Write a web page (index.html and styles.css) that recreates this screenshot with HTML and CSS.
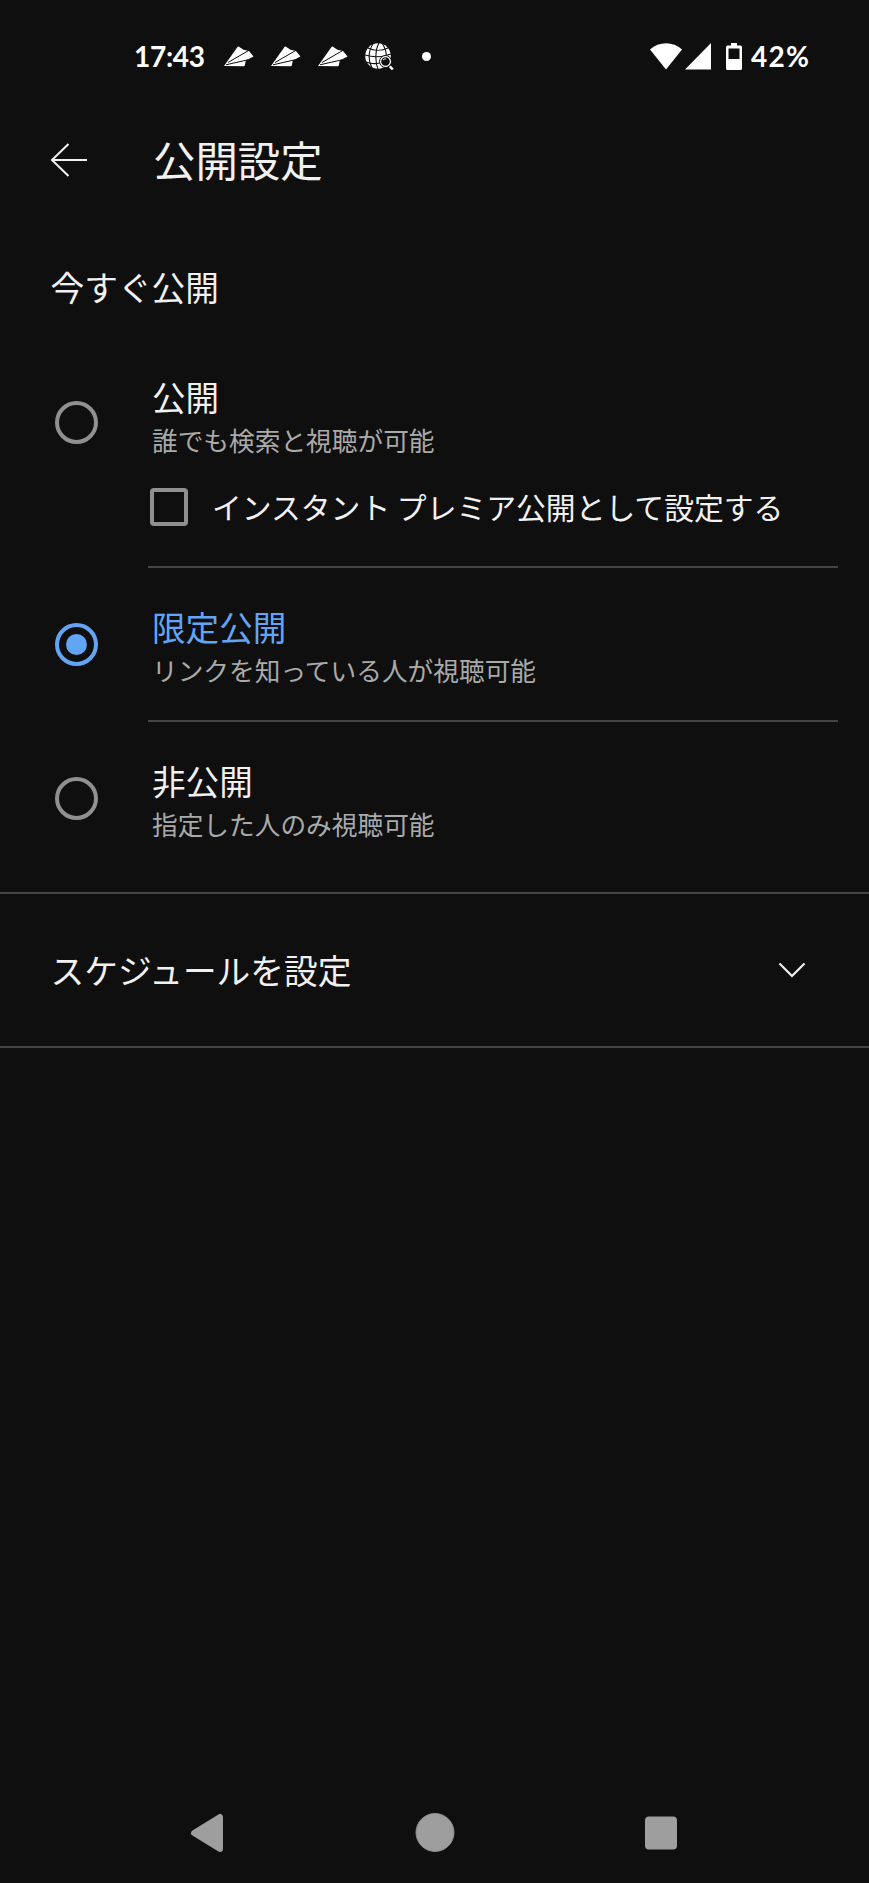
FILE: index.html
```html
<!DOCTYPE html>
<html lang="ja">
<head>
    <meta charset="UTF-8">
    <meta name="viewport" content="width=device-width, initial-scale=1.0">
    <title>公開設定</title>
    <link rel="stylesheet" href="styles.css">
</head>
<body>
    <svg class="symbols" width="0" height="0">
        <symbol id="plane" viewBox="0 0 30 21">
            <path fill="#fff" d="M0 20 L13.500 1 Q14 .2 15 .8 L19.500 3.800 L25 5 L29.500 10.500 L21.800 14.500 L20.800 19.500 Q20.600 20.300 19.500 20.300 Z"/>
            <path fill="none" stroke="#0f0f0f" stroke-width="1" d="M4 16.500 L25 4.300 M2 18.800 L24 13.800"/>
        </symbol>
    </svg>

    <div class="screen">
        <div class="status-bar">
            <span class="clock">17:43</span>
            <div class="notifications">
                <svg class="plane" width="30" height="21"><use href="#plane"/></svg>
                <svg class="plane" width="30" height="21"><use href="#plane"/></svg>
                <svg class="plane" width="30" height="21"><use href="#plane"/></svg>
                <svg class="globe" width="29" height="28" viewBox="0 0 29 28">
                    <circle cx="13" cy="13" r="12.8" fill="#fff"/>
                    <g fill="none" stroke="#0f0f0f" stroke-width="1.1">
                        <path d="M14 0 C10 7 10 19 13 26 M8 1 C3 8 3 18 7 25 M17 0 C21 6 22 11 21 17"/>
                        <path d="M3 5 C9 8 17 8 23 5 M0 12 C8 14.500 18 14 26 11 M1 19 C6 21 10 21 15 20"/>
                    </g>
                    <circle cx="20.500" cy="18.500" r="6" fill="#fff" stroke="#0f0f0f" stroke-width="1"/>
                    <circle cx="20.500" cy="18.500" r="4.300" fill="#0f0f0f"/>
                    <path d="M18 17 A3 3 0 0 1 21 16" fill="none" stroke="#fff"/>
                    <path d="M24.800 23.300 L27.800 26.500" stroke="#fff" stroke-width="2.500"/>
                </svg>
                <span class="dot"></span>
            </div>
            <div class="system">
                <svg width="32" height="27" viewBox="0 0 32 27">
                    <path fill="#fff" d="M0 6.500 C9 -2 23 -2 32 6.500 L16 26.500 Z"/>
                </svg>
                <svg class="signal" width="26" height="27" viewBox="0 0 26 27">
                    <path fill="#fff" d="M26 0 V26.500 H0 Z"/>
                </svg>
                <svg class="battery" width="16" height="28" viewBox="0 0 16 28">
                    <path fill="#fff" fill-rule="evenodd" d="M5 0 H11 V2.500 H14.500 Q16 2.500 16 4 V25.500 Q16 27 14.500 27 H1.500 Q0 27 0 25.500 V4 Q0 2.500 1.500 2.500 H5 Z M2.500 5.500 V16 H13.500 V5.500 Z"/>
                </svg>
                <span class="percent">42%</span>
            </div>
        </div>

        <div class="app-bar">
            <svg class="back" width="38" height="36" viewBox="0 0 38 36">
                <path d="M18.500 2 L2 18 L18.500 34 M2 18 H37"/>
            </svg>
            <h1>公開設定</h1>
        </div>

        <h2 class="section-title">今すぐ公開</h2>

        <div class="options">
            <div class="option option-public">
                <span class="radio"></span>
                <div class="option-body">
                    <div class="option-name">公開</div>
                    <div class="option-desc">誰でも検索と視聴が可能</div>
                    <div class="premiere">
                        <span class="checkbox"></span>
                        <span class="premiere-label">インスタント プレミア公開として設定する</span>
                    </div>
                </div>
            </div>
            <div class="option option-unlisted selected">
                <span class="radio"></span>
                <div class="option-body">
                    <div class="option-name">限定公開</div>
                    <div class="option-desc">リンクを知っている人が視聴可能</div>
                </div>
            </div>
            <div class="option option-private">
                <span class="radio"></span>
                <div class="option-body">
                    <div class="option-name">非公開</div>
                    <div class="option-desc">指定した人のみ視聴可能</div>
                </div>
            </div>
        </div>

        <div class="schedule">
            <span>スケジュールを設定</span>
            <svg width="28" height="16" viewBox="0 0 28 16">
                <path d="M1.500 1.500 L14 14 L26.500 1.500"/>
            </svg>
        </div>

        <div class="nav-bar">
            <svg width="40" height="42" viewBox="0 0 40 42">
                <path d="M6 21 L32 5 V37 Z" fill="#9e9e9e" stroke="#9e9e9e" stroke-width="6" stroke-linejoin="round"/>
            </svg>
            <svg width="40" height="42" viewBox="0 0 40 42">
                <circle cx="20" cy="20.500" r="19" fill="#9e9e9e" stroke="#8c8c8c"/>
            </svg>
            <svg width="40" height="42" viewBox="0 0 40 42">
                <rect x="4" y="4.500" width="32" height="33" rx="4" fill="#9e9e9e"/>
            </svg>
        </div>
    </div>
</body>
</html>
```

FILE: styles.css
```css
* {
    margin: 0;
    padding: 0;
    box-sizing: border-box;
}

body {
    font-family: "Noto Sans CJK JP", sans-serif;
    background: #0f0f0f;
    color: #f1f1f1;
}

svg {
    display: block;
    flex: none;
}

.symbols {
    display: none;
}

.screen {
    display: flex;
    flex-direction: column;
    height: 1883px;
}

/* status bar */
.status-bar {
    display: flex;
    align-items: center;
    height: 114px;
    padding: 0 57px 1px 134px;
    font-family: Lato, sans-serif;
    font-size: 28px;
    font-weight: 700;
    color: #fff;
}

.clock {
    width: 90px;
    padding-bottom: 1px;
    letter-spacing: -0.3px;
}

.notifications {
    display: flex;
    align-items: center;
    gap: 17px;
}

.dot {
    width: 9px;
    height: 9px;
    margin-left: 11px;
    border-radius: 50%;
    background: #fff;
}

.system {
    display: flex;
    align-items: center;
    margin-left: auto;
}

.signal {
    margin-left: 3px;
}

.battery {
    margin-left: 15px;
}

.percent {
    width: 61px;
    margin-left: 9px;
    padding-bottom: 1px;
    letter-spacing: 1.3px;
}

/* app bar */
.app-bar {
    display: flex;
    align-items: center;
    height: 92px;
    padding-left: 50px;
}

.back {
    margin-right: 65px;
    fill: none;
    stroke: #f1f1f1;
    stroke-width: 2;
}

.app-bar h1 {
    padding-bottom: 3px;
    font-size: 42.4px;
    font-weight: 400;
    line-height: 60px;
}

.section-title {
    height: 169px;
    padding-left: 50.5px;
    font-size: 33.7px;
    font-weight: 400;
    line-height: 162px;
}

/* options */
.option {
    display: flex;
    align-items: flex-start;
    padding-left: 55px;
}

.radio {
    display: flex;
    align-items: center;
    justify-content: center;
    width: 43px;
    height: 43px;
    margin-top: 18px;
    border: 4px solid #909090;
    border-radius: 50%;
}

.option-body {
    flex: 1;
    margin: 0 31px 0 50px;
    padding-left: 4px;
    border-bottom: 2px solid #444;
}

.option-public .radio {
    margin-top: 26px;
}

.option-public .option-body {
    height: 193px;
}

.option-unlisted {
    padding-top: 37px;
}

.option-unlisted .option-body {
    height: 117px;
}

.option-private {
    padding-top: 37px;
}

.option-private .option-body {
    height: 133px;
    border-bottom: none;
}

.option-name {
    font-size: 33.6px;
    line-height: 44px;
}

.option-desc {
    font-size: 25.7px;
    line-height: 42px;
    color: #aaa;
}

.selected .radio {
    border-color: #62a5f5;
}

.selected .radio::after {
    content: "";
    width: 21px;
    height: 21px;
    border-radius: 50%;
    background: #62a5f5;
}

.selected .option-name {
    color: #62a5f5;
}

.premiere {
    display: flex;
    align-items: center;
    margin: 27px 0 0 -2px;
}

.checkbox {
    width: 38px;
    height: 38px;
    border: 4px solid #909090;
    border-radius: 4px;
}

.premiere-label {
    margin-left: 24px;
    padding-bottom: 2px;
    font-size: 29.8px;
    line-height: 36px;
    white-space: nowrap;
}

/* schedule */
.schedule {
    display: flex;
    align-items: center;
    justify-content: space-between;
    height: 156px;
    padding: 0 63px 0 50.5px;
    border-top: 2px solid #444;
    border-bottom: 2px solid #444;
    font-size: 33.7px;
}

.schedule span {
    padding-bottom: 1px;
}

.schedule svg {
    fill: none;
    stroke: #f1f1f1;
    stroke-width: 2.2;
}

/* navigation bar */
.nav-bar {
    display: flex;
    justify-content: space-between;
    margin-top: auto;
    padding: 0 188px 29px;
}
```
